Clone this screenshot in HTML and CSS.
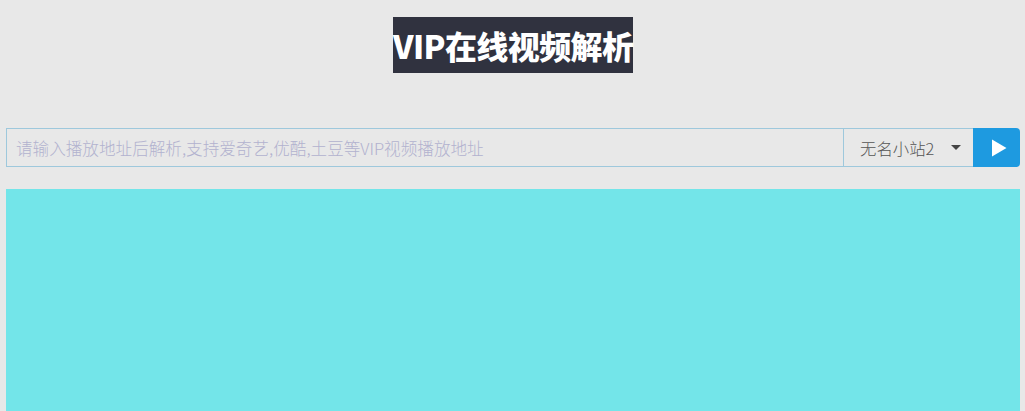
FILE: index.html
```html
<!DOCTYPE html>
<html lang="zh-CN">
<head>
<meta charset="utf-8">
<title>VIP在线视频解析</title>
<link rel="stylesheet" href="styles.css">
</head>
<body>
<div class="page">
  <header class="head">
    <h1 class="title">VIP在线视频解析</h1>
  </header>
  <form class="bar">
    <input class="url" type="text" placeholder="请输入播放地址后解析,支持爱奇艺,优酷,土豆等VIP视频播放地址">
    <div class="select">
      <span class="select-text">无名小站2</span>
      <span class="caret"></span>
    </div>
    <button class="go" type="button" aria-label="播放">
      <svg width="16" height="18" viewBox="0 0 16 18"><path d="M1 0.5 L15.5 9 L1 17.5 Z" fill="#fff"/></svg>
    </button>
  </form>
  <div class="player"></div>
</div>
</body>
</html>
```
FILE: styles.css
```css
html, body {
  margin: 0;
  padding: 0;
  background: #e8e8e8;
  font-family: "Noto Sans CJK SC", "Noto Sans", sans-serif;
  overflow: hidden;
}
.page {
  padding: 17px 5px 0 6px;
}
.head {
  display: flex;
  justify-content: center;
}
.title {
  margin: 0;
  width: 240px;
  height: 56px;
  line-height: 56px;
  background: #30323f;
  color: #fff;
  font-size: 32px;
  font-weight: 900;
  letter-spacing: -0.6px;
  white-space: nowrap;
  text-align: center;
}
.bar {
  margin-top: 55px;
  display: flex;
  height: 39px;
}
.url {
  flex: 1;
  box-sizing: border-box;
  height: 39px;
  margin: 0;
  border: 1px solid #9ec8dc;
  border-right: none;
  background: #e8e8e8;
  padding: 0 9px;
  font-family: "Noto Sans CJK SC", sans-serif;
  font-size: 16.6px;
  font-weight: 300;
  color: #333;
  outline: none;
}
.url::placeholder {
  color: #b2b2cf;
}
.select {
  box-sizing: border-box;
  width: 130px;
  height: 39px;
  border: 1px solid #9ec8dc;
  border-right: none;
  display: flex;
  align-items: center;
  padding: 0 12px 0 16px;
  font-size: 16.4px;
  font-weight: 300;
  color: #555;
}
.select-text {
  flex: 1;
}
.caret {
  width: 0;
  height: 0;
  border-left: 5px solid transparent;
  border-right: 5px solid transparent;
  border-top: 5px solid #444;
}
.go {
  width: 47px;
  height: 39px;
  margin: 0;
  border: none;
  background: #1e9ae0;
  border-radius: 0 4px 4px 0;
  display: flex;
  align-items: center;
  justify-content: center;
  padding: 0 0 0 4px;
}
.player {
  margin-top: 22px;
  height: 240px;
  background: #73e5e9;
}
```
